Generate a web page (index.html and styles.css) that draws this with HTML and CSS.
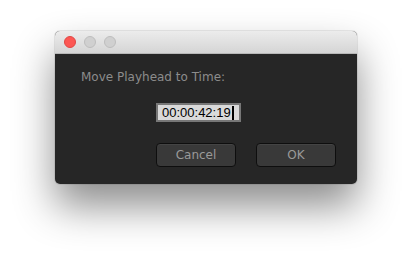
FILE: index.html
```html
<!DOCTYPE html>
<html lang="en">
    <head>
        <meta charset="UTF-8" />
        <title>Move Playhead</title>
        <link rel="stylesheet" href="styles.css">
    </head>
    <body>
        <div class="window">
            <div class="titlebar">
                <span class="light close"></span>
                <span class="light"></span>
                <span class="light"></span>
            </div>
            <div class="content">
                <div class="label">Move Playhead to Time:</div>
                <div class="field-row">
                    <div class="field">00:00:42:19<span class="caret"></span></div>
                </div>
                <div class="buttons">
                    <button class="btn">Cancel</button>
                    <button class="btn">OK</button>
                </div>
            </div>
        </div>
    </body>
</html>
```

FILE: styles.css
```css
* {
    box-sizing: border-box;
}
body {
    margin: 0;
    width: 412px;
    height: 264px;
    background: #ffffff;
    padding: 31px 0 0 55px;
    font-family: "DejaVu Sans", sans-serif;
    overflow: hidden;
}
.window {
    width: 302px;
    height: 153px;
    border-radius: 5px;
    background: #262626;
    box-shadow: 0 22px 40px rgba(0, 0, 0, 0.45), 0 0 0 1px rgba(0, 0, 0, 0.08);
    display: flex;
    flex-direction: column;
    overflow: hidden;
}
.titlebar {
    height: 23px;
    background: linear-gradient(#ececec, #d5d5d5);
    border-bottom: 1px solid #b8b8b8;
    display: flex;
    align-items: center;
    gap: 8px;
    padding-left: 9px;
}
.light {
    width: 12px;
    height: 12px;
    border-radius: 50%;
    background: #d0d0d0;
    border: 1px solid #bdbdbd;
}
.light.close {
    background: #fc5753;
    border-color: #df4744;
}
.content {
    flex: 1;
    display: flex;
    flex-direction: column;
    padding: 15px 21px 0 26px;
}
.label {
    color: #8c8c8c;
    font-size: 12px;
    line-height: 16px;
}
.field-row {
    display: flex;
    padding: 18px 0 0 75px;
}
.field {
    width: 85px;
    height: 19px;
    border: 2px solid #777777;
    background: #d9d9d9;
    color: #000;
    font-family: "Liberation Sans", sans-serif;
    font-size: 13px;
    line-height: 15px;
    padding-left: 4px;
    display: flex;
    align-items: center;
}
.caret {
    width: 2px;
    height: 14px;
    background: #000;
    margin-left: 1px;
}
.buttons {
    display: flex;
    justify-content: flex-end;
    gap: 20px;
    padding-top: 21px;
}
.btn {
    width: 80px;
    height: 24px;
    border: 1px solid #0e0e0e;
    border-radius: 4px;
    background: #393939;
    box-shadow: inset 0 1px 0 #444;
    color: #9a9a9a;
    font-family: "DejaVu Sans", sans-serif;
    font-size: 12px;
    padding: 0;
}
```
